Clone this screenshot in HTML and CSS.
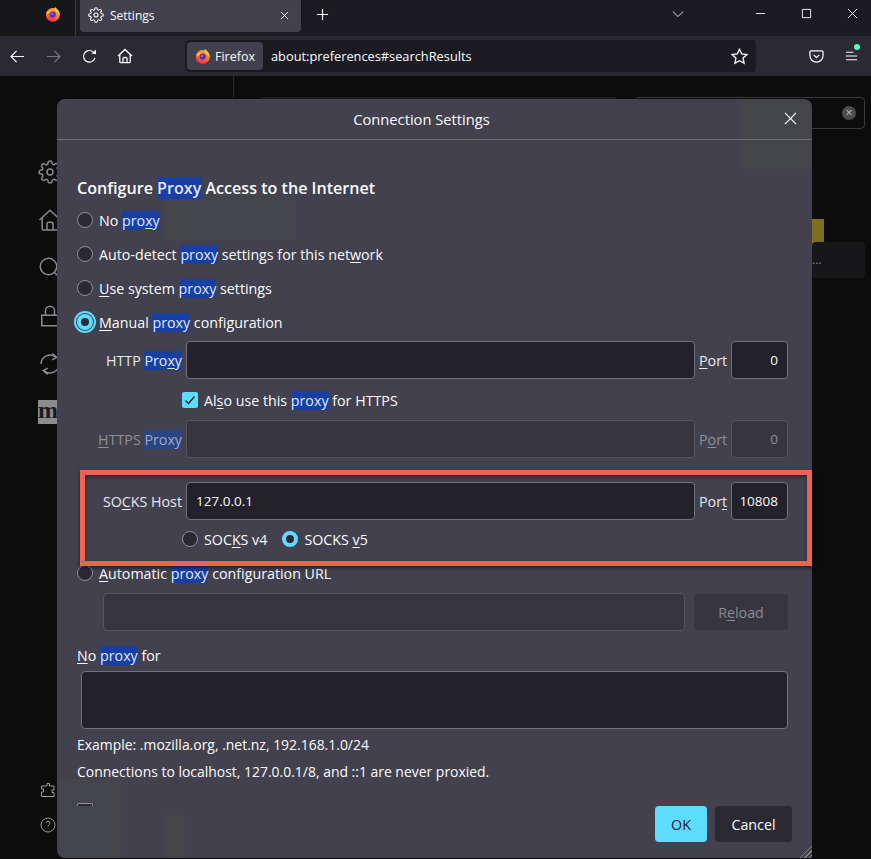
FILE: index.html
```html
<!DOCTYPE html>
<html lang="en">

<head>
    <meta charset="UTF-8">
    <meta name="viewport" content="width=device-width, initial-scale=1.0">
    <title>Connection Settings</title>
    <link rel="stylesheet" href="styles.css">
</head>

<body>
    <!-- shared icons -->
    <svg class="defs" xmlns="http://www.w3.org/2000/svg">
        <defs>
            <linearGradient id="foxBody" x1="0.7" y1="0" x2="0.3" y2="1">
                <stop offset="0" stop-color="#ffb52e" />
                <stop offset="0.55" stop-color="#ff6a2b" />
                <stop offset="1" stop-color="#f3275a" />
            </linearGradient>
            <symbol id="fox" viewBox="0 0 16 16">
                <circle cx="7.8" cy="8.9" r="6.9" fill="url(#foxBody)" />
                <path d="M10 .6c.6 1.8 2.4 2.3 3.5 4.2 1 1.700 1.300 3.500 1 5.300-.9-1.900-1.600-3.300-3-4.300C10.300 4.900 9.300 3 10 .6z" fill="#ffd23a" />
                <path d="M1.500 6.500C3 4.800 5 4.300 7 4.700 5.600 5.300 5 6 5 6.700 3.800 7 2.700 7.400 1.500 8.800z" fill="#ffbd2e" />
                <circle cx="7.700" cy="8.500" r="3.100" fill="#5b2bb5" />
                <circle cx="7" cy="7.900" r="1.300" fill="#8f5ae0" />
            </symbol>
            <symbol id="gear" viewBox="0 0 24 24">
                <circle cx="12" cy="12" r="3" />
                <path d="M19.400 15a1.650 1.650 0 0 0 .33 1.820l.06.06a2 2 0 0 1 0 2.830 2 2 0 0 1-2.830 0l-.06-.06a1.650 1.650 0 0 0-1.820-.33 1.650 1.650 0 0 0-1 1.510V21a2 2 0 0 1-2 2 2 2 0 0 1-2-2v-.09A1.650 1.650 0 0 0 9 19.400a1.650 1.650 0 0 0-1.820.33l-.06.06a2 2 0 0 1-2.830 0 2 2 0 0 1 0-2.830l.06-.06a1.650 1.650 0 0 0 .33-1.820 1.650 1.650 0 0 0-1.510-1H3a2 2 0 0 1-2-2 2 2 0 0 1 2-2h.09A1.650 1.650 0 0 0 4.600 9a1.650 1.650 0 0 0-.33-1.820l-.06-.06a2 2 0 0 1 0-2.830 2 2 0 0 1 2.830 0l.06.06a1.650 1.650 0 0 0 1.820.33H9a1.650 1.650 0 0 0 1-1.510V3a2 2 0 0 1 2-2 2 2 0 0 1 2 2v.09a1.650 1.650 0 0 0 1 1.510 1.650 1.650 0 0 0 1.820-.33l.06-.06a2 2 0 0 1 2.830 0 2 2 0 0 1 0 2.830l-.06.06a1.650 1.650 0 0 0-.33 1.820V9a1.650 1.650 0 0 0 1.510 1H21a2 2 0 0 1 2 2 2 2 0 0 1-2 2h-.09a1.650 1.650 0 0 0-1.510 1z" />
            </symbol>
            <symbol id="home" viewBox="0 0 16 16">
                <path d="M1 8l7-6.500L15 8M2.800 6.500v7.200a1 1 0 0 0 1 1h8.400a1 1 0 0 0 1-1V6.500M6 14.700V10.500a1 1 0 0 1 1-1h2a1 1 0 0 1 1 1v4.200" />
            </symbol>
        </defs>
    </svg>

    <!-- tab strip -->
    <div class="tabbar">
        <div class="pinned"><svg class="fox"><use href="#fox" /></svg></div>
        <div class="tab">
            <svg class="ico gear-ico"><use href="#gear" /></svg>
            <span class="tab_title">Settings</span>
            <svg class="ico tab_close" viewBox="0 0 10 10"><path d="M1 1l8 8M9 1l-8 8" /></svg>
        </div>
        <svg class="ico newtab" viewBox="0 0 14 14"><path d="M7 1v12M1 7h12" /></svg>
        <svg class="ico chevron" viewBox="0 0 14 8"><path d="M1 1l6 6 6-6" /></svg>
        <div class="winbtns">
            <svg class="ico" viewBox="0 0 12 12"><path d="M1 6h10" /></svg>
            <svg class="ico" viewBox="0 0 12 12"><path d="M1.500 1.500h9v9h-9z" /></svg>
            <svg class="ico" viewBox="0 0 12 12"><path d="M1 1l10 10M11 1L1 11" /></svg>
        </div>
    </div>

    <!-- nav toolbar -->
    <div class="navbar">
        <svg class="ico nav_back" viewBox="0 0 16 14"><path d="M15 7H1.500M7 1L1 7l6 6" /></svg>
        <svg class="ico nav_fwd" viewBox="0 0 16 14"><path d="M1 7h13.500M9 1l6 6-6 6" /></svg>
        <svg class="ico nav_reload" viewBox="0 0 16 16"><path d="M13.800 9.500A6.200 6.200 0 1 1 11.500 2.800" /><path class="filled" d="M10 4.800L15 5.500 14.800 .6z" /></svg>
        <svg class="ico nav_home"><use href="#home" /></svg>
        <div class="urlbar">
            <div class="identity"><svg class="fox"><use href="#fox" /></svg>Firefox</div>
            <span class="url">about:preferences#searchResults</span>
            <svg class="ico star" viewBox="0 0 16 16"><path d="M8 1.200l2.100 4.400 4.800.6-3.500 3.300.9 4.800L8 12l-4.300 2.300.9-4.800L1.100 6.200l4.800-.6z" /></svg>
        </div>
        <svg class="ico pocket" viewBox="0 0 16 16"><path d="M2.300 2h11.400A1.300 1.300 0 0 1 15 3.300V7a7 7 0 0 1-14 0V3.300A1.300 1.300 0 0 1 2.300 2z" /><path d="M5 6.200l3 3 3-3" /></svg>
        <div class="menu_btn">
            <svg class="ico" viewBox="0 0 14 12"><path d="M1 2h8M1 6h12M1 10h12" /></svg>
            <span class="menu_dot"></span>
        </div>
    </div>

    <!-- preferences page behind the dialog -->
    <div class="page">
        <div class="sidebar">
            <svg class="ico side_ico side_gear"><use href="#gear" /></svg>
            <svg class="ico side_ico"><use href="#home" /></svg>
            <svg class="ico side_ico" viewBox="0 0 16 16"><circle cx="7" cy="7" r="5.500" /><path d="M11 11l4 4" /></svg>
            <svg class="ico side_ico" viewBox="0 0 16 16"><path d="M2.500 7.500h11v7h-11zM5 7.500V4.500a3 3 0 0 1 6 0v3" /></svg>
            <svg class="ico side_ico" viewBox="0 0 16 16"><path d="M2 8a6 6 0 0 1 10-4.400M14 8a6 6 0 0 1-10 4.400M9.500 1l3 2.600-3 1.600M6.500 15l-3-2.600 3-1.600" /></svg>
            <div class="side_m">m</div>
            <div class="side_spacer"></div>
            <svg class="ico side_small" viewBox="0 0 16 16"><path d="M7 1.500h2.500v2.500H14v4h-2v2.500h2V14.500H1.500V10h2V7h-2V4H7z" /></svg>
            <svg class="ico side_small side_help" viewBox="0 0 16 16"><circle cx="8" cy="8" r="7" /><path d="M6 6.200a2 2 0 1 1 3 1.800c-.7.400-1 .8-1 1.700M8 11.500v.8" /></svg>
        </div>
        <div class="page_main">
            <div class="behind_row">
                <div class="behind_bar"></div>
                <div class="search_behind"><span class="search_clear">&times;</span></div>
            </div>
            <div class="result_col">
                <div class="yellow_mark"></div>
                <div class="result_card">...</div>
            </div>
        </div>

        <!-- dialog -->
        <div class="dialog">
            <div class="dlg_head">
                Connection Settings
                <svg class="ico dlg_close" viewBox="0 0 14 14"><path d="M1 1l12 12M13 1L1 13" /></svg>
            </div>
            <div class="dlg_body">
                <h1 class="heading">Configure <mark>Proxy</mark> Access to the Internet</h1>

                <div class="radio_row"><span class="radio"></span><span>No <mark>pro<u>x</u>y</mark></span></div>
                <div class="radio_row"><span class="radio"></span><span>Auto-detect <mark>proxy</mark> settings for this net<u>w</u>ork</span></div>
                <div class="radio_row"><span class="radio"></span><span><u>U</u>se system <mark>proxy</mark> settings</span></div>
                <div class="radio_row"><span class="radio radio_on radio_focus"></span><span><u>M</u>anual <mark>proxy</mark> configuration</span></div>

                <div class="proxy_row first_row">
                    <label class="host_label">HTTP <mark>Pro<u>x</u>y</mark></label>
                    <div class="field"></div>
                    <label class="port_label"><u>P</u>ort</label>
                    <div class="field port_field">0</div>
                </div>
                <div class="check_row">
                    <span class="checkbox"><svg viewBox="0 0 16 16"><path d="M3.500 8.500l3 3 6-7" /></svg></span>
                    <span>Al<u>s</u>o use this <mark>proxy</mark> for HTTPS</span>
                </div>
                <div class="proxy_row is_disabled">
                    <label class="host_label"><u>H</u>TTPS <mark>Proxy</mark></label>
                    <div class="field"></div>
                    <label class="port_label">P<u>o</u>rt</label>
                    <div class="field port_field">0</div>
                </div>
                <div class="proxy_row socks_row">
                    <label class="host_label">SO<u>C</u>KS Host</label>
                    <div class="field host_value">127.0.0.1</div>
                    <label class="port_label">Por<u>t</u></label>
                    <div class="field port_field">10808</div>
                </div>
                <div class="socks_versions">
                    <span class="radio"></span><span class="socks_text">SOC<u>K</u>S v4</span>
                    <span class="radio radio_on"></span><span>SOCKS <u>v</u>5</span>
                </div>
                <div class="radio_row"><span class="radio"></span><span><u>A</u>utomatic <mark>proxy</mark> configuration URL</span></div>
                <div class="url_row">
                    <div class="field field_off"></div>
                    <div class="reload">R<u>e</u>load</div>
                </div>
                <div class="noproxy_label"><u>N</u>o <mark>proxy</mark> for</div>
                <div class="field noproxy_box"></div>
                <div class="hint">Example: .mozilla.org, .net.nz, 192.168.1.0/24</div>
                <div class="hint hint_two">Connections to localhost, 127.0.0.1/8, and ::1 are never proxied.</div>
                <div class="clipped_check"></div>
            </div>
            <div class="dlg_foot">
                <button class="btn btn_ok">OK</button>
                <button class="btn btn_cancel">Cancel</button>
            </div>
            <div class="grip"></div>
            <!-- red annotation box from the screenshot -->
            <div class="callout"></div>
        </div>
    </div>
</body>

</html>
```

FILE: styles.css
```css
* {
    box-sizing: border-box;
}

html,
body {
    margin: 0;
    height: 100%;
}

body {
    width: 871px;
    height: 859px;
    overflow: hidden;
    background-color: #0c0c0d;
    color: #fbfbfe;
    font-family: 'Open Sans', 'Noto Sans', sans-serif;
    font-size: 14.25px;
}

.defs {
    display: block;
    width: 0;
    height: 0;
}

.ico {
    fill: none;
    stroke: #fbfbfe;
    stroke-width: 1.3;
    flex: none;
}

.filled {
    fill: #fbfbfe;
    stroke: none;
}

.fox {
    width: 16px;
    height: 16px;
    flex: none;
}

/* tab strip */
.tabbar {
    height: 36px;
    display: flex;
    align-items: flex-start;
    background-color: #1c1b22;
}

.pinned {
    width: 76px;
    height: 36px;
    padding: 6px 0 0 45px;
    background-color: #17171a;
    border-right: 1px solid #3a3942;
}

.tab {
    width: 221px;
    height: 32px;
    margin-left: 4px;
    padding: 0 12px 2px 8px;
    display: flex;
    align-items: center;
    background-color: #42414d;
    border-radius: 0 0 4px 4px;
    font-size: 12px;
}

.gear-ico {
    width: 16px;
    height: 16px;
    stroke-width: 1.6;
    margin-right: 6px;
}

.tab_title {
    flex: 1;
}

.tab_close {
    width: 9px;
    height: 9px;
    stroke-width: 1;
}

.newtab {
    width: 13px;
    height: 13px;
    margin: 8px 0 0 15px;
}

.chevron {
    width: 12px;
    height: 8px;
    margin: 10px 0 0 343px;
    stroke-width: 1;
}

.winbtns {
    display: flex;
    gap: 35px;
    margin: 8px 0 0 71px;
}

.winbtns .ico {
    width: 11px;
    height: 11px;
    stroke-width: 1;
}

/* nav toolbar */
.navbar {
    height: 40px;
    display: flex;
    align-items: center;
    padding-left: 10px;
    background-color: #2b2a33;
}

.nav_back,
.nav_fwd {
    width: 15px;
    height: 13px;
}

.nav_fwd {
    margin-left: 21px;
    stroke: #77767d;
}

.nav_reload {
    width: 15px;
    height: 15px;
    margin-left: 21px;
}

.nav_home {
    width: 16px;
    height: 16px;
    margin-left: 20px;
}

.urlbar {
    width: 571px;
    height: 32px;
    margin-left: 52px;
    padding: 0 8px 0 2px;
    display: flex;
    align-items: center;
    background-color: #1c1b22;
    border-radius: 4px;
}

.identity {
    width: 76px;
    height: 28px;
    display: flex;
    align-items: center;
    gap: 4px;
    padding-left: 8px;
    background-color: #42414d;
    border-radius: 4px;
    font-size: 12.5px;
}

.url {
    flex: 1;
    margin-left: 8px;
    font-size: 12.8px;
}

.star {
    width: 17px;
    height: 17px;
}

.pocket {
    width: 15px;
    height: 15px;
    margin-left: 53px;
}

.menu_btn {
    position: relative;
    margin-left: 21px;
    display: flex;
}

.menu_btn .ico {
    width: 13px;
    height: 12px;
    stroke-width: 1.1;
}

.menu_dot {
    position: absolute;
    top: -6px;
    right: -2px;
    width: 6px;
    height: 6px;
    border-radius: 50%;
    background-color: #54ffbd;
}

/* page behind dialog */
.page {
    position: relative;
    height: 783px;
    display: flex;
    background: linear-gradient(#2a2a2e, #2a2a2e) 233px 0 / 1px 22px no-repeat;
}

.sidebar {
    width: 233px;
    padding: 84px 0 0 38px;
    display: flex;
    flex-direction: column;
    gap: 24px;
}

.side_ico {
    width: 24px;
    height: 24px;
    stroke: #8a8a90;
    stroke-width: 1;
}

.side_gear {
    stroke-width: 1.5;
}

.side_m {
    width: 24px;
    height: 24px;
    background-color: #8c8c8c;
    color: #1c1b22;
    font-family: 'Liberation Serif', serif;
    font-weight: bold;
    font-size: 24px;
    line-height: 20px;
    text-align: left;
}

.side_spacer {
    height: 310px;
}

.side_small {
    width: 16px;
    height: 16px;
    margin-left: 2px;
    stroke: #9a9aa0;
    stroke-width: 1;
}

.side_help {
    margin-top: -5px;
}

.page_main {
    flex: 1;
    display: flex;
    flex-direction: column;
    align-items: flex-end;
    padding: 21px 6px 0 0;
}

.behind_row {
    display: flex;
    align-items: flex-start;
    gap: 18px;
}

.behind_bar {
    width: 357px;
    height: 4px;
    background-color: #1a1a1e;
    border-radius: 3px 3px 0 0;
}

.search_behind {
    width: 230px;
    height: 32px;
    padding-right: 8px;
    display: flex;
    align-items: center;
    justify-content: flex-end;
    border: 1px solid #3a3a3c;
    border-radius: 4px;
}

.search_clear {
    width: 14px;
    height: 14px;
    border-radius: 50%;
    background-color: #4c4c4e;
    color: #b9b9bb;
    font-size: 13px;
    line-height: 13px;
    text-align: center;
}

.result_col {
    width: 53px;
    margin-top: 90px;
}

.yellow_mark {
    width: 12px;
    height: 27px;
    background-color: #7c7020;
}

.result_card {
    height: 36px;
    margin-top: -4px;
    padding: 12px 0 0 0;
    background-color: #17171a;
    border-radius: 4px;
    color: #8a8a90;
    font-size: 12px;
    line-height: 12px;
}

/* dialog */
.dialog {
    position: absolute;
    top: 23px;
    left: 57px;
    width: 755px;
    height: 759px;
    display: flex;
    flex-direction: column;
    border-radius: 8px;
    background:
        linear-gradient(#434548, #434548) 685px 0 / 70px 70px no-repeat,
        linear-gradient(#43454b, #43454b) 108px 91px / 130px 50px no-repeat,
        linear-gradient(#43454b, #43454b) 0 680px / 64px 79px no-repeat,
        linear-gradient(#43454b, #43454b) 108px 716px / 20px 43px no-repeat,
        #42414d;
}

.dlg_head {
    position: relative;
    height: 41px;
    flex: none;
    padding-right: 26px;
    display: flex;
    align-items: center;
    justify-content: center;
    border-bottom: 1px solid #6f6e78;
    font-size: 14.7px;
}

.dlg_close {
    position: absolute;
    top: 13px;
    right: 15px;
    width: 13px;
    height: 13px;
    stroke-width: 1.3;
}

.dlg_body {
    flex: 1;
    padding: 34px 24px 0 20px;
}

.heading {
    margin: 0 0 2px;
    height: 28px;
    font-size: 16.1px;
    line-height: 28px;
    font-weight: 600;
}

mark {
    background-color: #1a3fa3;
    color: #dfe8ff;
}

u {
    text-underline-offset: 2px;
}

.radio_row {
    height: 34px;
    padding-bottom: 2px;
    display: flex;
    align-items: center;
    gap: 6px;
}

.radio {
    width: 16px;
    height: 16px;
    flex: none;
    border: 1px solid #8f8f9d;
    border-radius: 50%;
    background-color: #2b2a33;
}

.radio_on {
    border: 4px solid #5ddcff;
    background-color: #2b2a33;
}

.radio_focus {
    box-shadow: 0 0 0 1px #42414d, 0 0 0 3px #5ddcff;
}

.proxy_row {
    height: 38px;
    display: flex;
    align-items: center;
}

.first_row {
    margin-top: 1px;
}

.host_label {
    width: 109px;
    padding-right: 4px;
    text-align: right;
    white-space: nowrap;
    color: #e8e8ee;
}

.field {
    flex: 1;
    height: 38px;
    padding: 0 9px;
    display: flex;
    align-items: center;
    border: 1px solid #72717c;
    border-radius: 4px;
    background-color: #23222b;
}

.host_value {
    font-size: 13.5px;
}

.port_label {
    width: 36px;
    padding-left: 4px;
    color: #e8e8ee;
}

.port_field {
    flex: none;
    width: 57px;
    justify-content: flex-end;
    font-size: 13.5px;
}

.is_disabled {
    color: #8f8f96;
}

.is_disabled .host_label,
.is_disabled .port_label {
    color: #8f8f96;
}

.is_disabled mark {
    background-color: #2a4484;
    color: #9fa9c4;
}

.is_disabled .field {
    background-color: #373640;
    border-color: #55545e;
}

.check_row {
    height: 41px;
    padding: 1px 0 0 105px;
    display: flex;
    align-items: center;
    gap: 6px;
}

.checkbox {
    width: 16px;
    height: 16px;
    flex: none;
    border-radius: 2px;
    background-color: #5ddcff;
}

.checkbox svg {
    display: block;
    fill: none;
    stroke: #23222b;
    stroke-width: 1.3;
}

.socks_row {
    margin-top: 24px;
}

.socks_versions {
    height: 34px;
    margin-top: 3px;
    padding: 0 0 2px 105px;
    display: flex;
    align-items: center;
    gap: 6px;
}

.socks_text {
    margin-right: 9px;
}

.url_row {
    height: 38px;
    margin: 2px 0 0 26px;
    display: flex;
    align-items: center;
}

.field_off {
    background-color: #373640;
    border-color: #55545e;
}

.reload {
    width: 94px;
    height: 36px;
    margin-left: 9px;
    display: flex;
    align-items: center;
    justify-content: center;
    background-color: #373640;
    border-radius: 4px;
    color: #8a8a91;
}

.noproxy_label {
    height: 20px;
    margin-top: 15px;
    line-height: 20px;
}

.noproxy_box {
    flex: none;
    height: 58px;
    margin: 5px 0 0 4px;
}

.hint {
    height: 20px;
    margin-top: 6px;
    font-size: 13.95px;
    line-height: 20px;
}

.hint_two {
    margin-top: 7px;
}

.clipped_check {
    width: 16px;
    height: 3px;
    margin-top: 21px;
    border: 1px solid #8f8f9d;
    border-bottom: none;
    border-radius: 2px 2px 0 0;
    background-color: #2b2a33;
}

.dlg_foot {
    flex: none;
    display: flex;
    justify-content: flex-end;
    gap: 8px;
    padding: 0 20px 16px;
}

.btn {
    height: 36px;
    border: none;
    border-radius: 4px;
    font-family: inherit;
    font-size: 14.25px;
}

.btn_ok {
    width: 52px;
    background-color: #5ddcff;
    color: #23222b;
}

.btn_cancel {
    width: 77px;
    background-color: #2b2a33;
    color: #fbfbfe;
}

.grip {
    position: absolute;
    right: 0;
    bottom: 0;
    width: 14px;
    height: 14px;
    background: repeating-linear-gradient(135deg, #42414d 0 2px, #85848d 2px 3px);
    clip-path: polygon(100% 0, 100% 100%, 0 100%);
}

.callout {
    position: absolute;
    top: 371px;
    left: 23px;
    width: 732px;
    height: 96px;
    border: 5px solid #ef6351;
    box-shadow: 0 2px 4px rgba(0, 0, 0, 0.5), inset 0 2px 4px rgba(0, 0, 0, 0.35);
}
```
